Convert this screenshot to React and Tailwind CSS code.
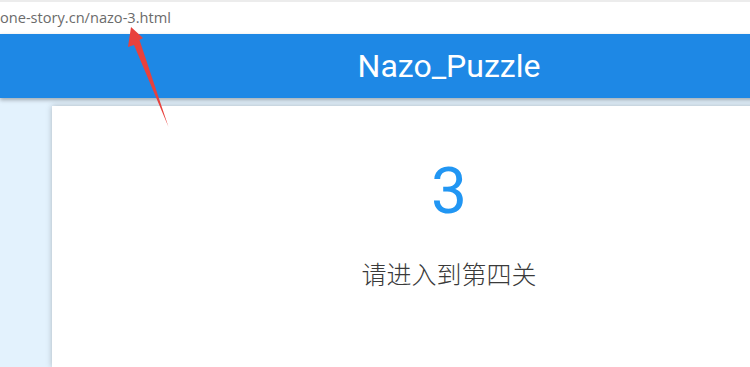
export default function App() {
  return (
    <div className="relative w-[750px] h-[367px] overflow-hidden bg-white">
      <div className="w-[898px] h-[367px] flex flex-col">
        <div className="h-[34px] shrink-0 flex flex-col bg-white">
          <div className="h-[2px] bg-[#ececec]" />
          <div className="flex-1 flex items-center">
            <span className="text-[14.6px] leading-none text-[#6b6b6b] pl-0 -mt-[2px]" style={{ fontFamily: '"Open Sans", "Noto Sans", sans-serif' }}>
              one-story.cn/nazo-3.html
            </span>
          </div>
        </div>
        <div className="flex-1 flex flex-col bg-[#e3f2fd]">
          <div className="h-[64px] shrink-0 bg-[#1e88e5] flex items-center justify-center shadow-[0_2px_4px_rgba(0,0,0,0.3)] relative z-10">
            <span className="text-white text-[32px]" style={{ fontFamily: 'Roboto, "Noto Sans", sans-serif' }}>
              Nazo_Puzzle
            </span>
          </div>
          <div className="flex-1 mx-[52px] mt-[8px] bg-white shadow-[0_0_6px_rgba(0,0,0,0.25)] flex flex-col items-center">
            <div className="mt-[54px] text-[#2196f3] text-[64px] leading-none" style={{ fontFamily: 'Roboto, "Noto Sans", sans-serif' }}>
              3
            </div>
            <div className="mt-[37px] text-[#3a3a3a] text-[25px] leading-none font-light" style={{ fontFamily: '"Noto Sans CJK SC", "Noto Sans", sans-serif' }}>
              请进入到第四关
            </div>
          </div>
        </div>
      </div>
      <svg className="absolute left-0 top-0 z-20 pointer-events-none" width="750" height="367" viewBox="0 0 750 367">
        <polygon points="131,27 143,38 139.5,40 168.5,127 134,45 128,47" fill="#e8413d" />
      </svg>
    </div>
  );
}
